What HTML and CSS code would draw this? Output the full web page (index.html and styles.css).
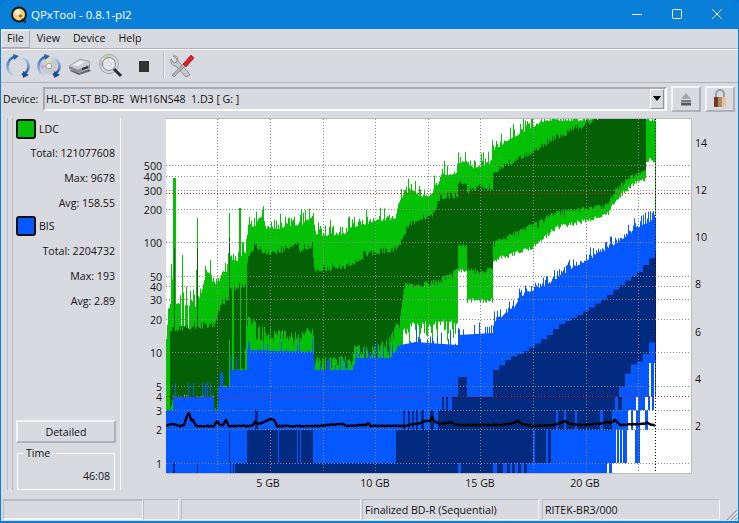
FILE: index.html
```html
<!DOCTYPE html>
<html lang="en">
<head>
    <meta charset="UTF-8">
    <title>QPxTool - 0.8.1-pl2</title>
    <link rel="stylesheet" href="styles.css">
</head>
<body>

<div class="window">
    <div class="titlebar">
        <svg class="app-icon" width="18" height="18" viewBox="0 0 18 18">
            <circle cx="9" cy="8.5" r="7" fill="#f4d27a" stroke="#1b1b1b" stroke-width="2"/>
            <circle cx="7.5" cy="6.5" r="2.6" fill="#fff6dc"/>
            <circle cx="10.5" cy="10" r="1.4" fill="#8a5a20"/>
            <path d="M12 13l3.5 3.5" stroke="#1b1b1b" stroke-width="2.4"/>
        </svg>
        <span class="title">QPxTool - 0.8.1-pl2</span>
        <div class="win-buttons">
            <svg width="12" height="12" viewBox="0 0 12 12"><path d="M1 6.5h10" stroke="#fff"/></svg>
            <svg width="12" height="12" viewBox="0 0 12 12"><rect x="1.5" y="1.5" width="9" height="9" rx="1" fill="none" stroke="#fff"/></svg>
            <svg width="12" height="12" viewBox="0 0 12 12"><path d="M1 1l10 10M11 1L1 11" stroke="#fff"/></svg>
        </div>
    </div>

    <div class="menubar">
        <span class="menu-item active">File</span>
        <span class="menu-item">View</span>
        <span class="menu-item">Device</span>
        <span class="menu-item">Help</span>
    </div>

    <div class="toolbar">
        <svg class="tool" width="26" height="26" viewBox="0 0 26 26">
            <defs>
                <linearGradient id="arcL" x1="0" y1="0" x2="0" y2="1"><stop offset="0" stop-color="#2a63ad"/><stop offset="1" stop-color="#c3dcf3"/></linearGradient>
                <linearGradient id="arcR" x1="0" y1="0" x2="0" y2="1"><stop offset="0" stop-color="#c3dcf3"/><stop offset="1" stop-color="#1c4b97"/></linearGradient>
            </defs>
            <path d="M11 3C5 5 2.500 9 2.500 13.500S5 21 9 23" fill="none" stroke="url(#arcL)" stroke-width="2.600"/>
            <path d="M8 1l6 2-5 4z" fill="#2a63ad"/>
            <path d="M17 4c4 2 6.500 5 6.500 9.500S21 20 17 22" fill="none" stroke="url(#arcR)" stroke-width="2.600"/>
            <path d="M18 18v7l6-3z" fill="#1c4b97"/>
        </svg>
        <svg class="tool" width="26" height="26" viewBox="0 0 26 26">
            <circle cx="13" cy="13" r="8.500" fill="#c8cbd0"/>
            <path d="M13 13L8 6a8.500 8.500 0 0 1 8-1z" fill="#d8e4a8"/>
            <path d="M13 13l-8 3a8.500 8.500 0 0 1-.5-4z" fill="#c9a6d8"/>
            <circle cx="13" cy="13" r="2.800" fill="#eef0f2" stroke="#8d9096" stroke-width=".8"/>
            <path d="M11 3C5 5 2.500 9 2.500 13.500S5 21 9 23" fill="none" stroke="url(#arcL)" stroke-width="2.600"/>
            <path d="M8 1l6 2-5 4z" fill="#2a63ad"/>
            <path d="M17 4c4 2 6.500 5 6.500 9.500S21 20 17 22" fill="none" stroke="url(#arcR)" stroke-width="2.600"/>
            <path d="M18 18v7l6-3z" fill="#1c4b97"/>
        </svg>
        <svg class="tool" width="26" height="26" viewBox="0 0 26 26">
            <path d="M2 13L13 6l9 2 1 4-12 5z" fill="#c9ccd1" stroke="#8b8e93" stroke-width=".6"/>
            <path d="M2 13l9 4 12-5v3l-12 5-9-4z" fill="#8b8d92"/>
            <path d="M3 18l9 4 12-4-2-2-10 4-8-3z" fill="#66686c"/>
            <path d="M6 12l7-4 5 1-7 4z" fill="#eceef0"/>
            <path d="M15 15l6-2v2l-6 2z" fill="#2b2c2e"/>
        </svg>
        <svg class="tool" width="26" height="26" viewBox="0 0 26 26">
            <circle cx="11" cy="11" r="9.500" fill="#d4d6da" stroke="#a5a8ad"/>
            <path d="M11 11L5 4a9.500 9.500 0 0 1 6-2z" fill="#bcd6a0"/>
            <path d="M11 11L2 13a9.500 9.500 0 0 1 .5-5z" fill="#d3b3dc"/>
            <circle cx="11" cy="11" r="6.500" fill="#eef0f3" fill-opacity=".65" stroke="#85888d"/>
            <circle cx="11" cy="11" r="2" fill="#f7f8f9" stroke="#a5a8ad" stroke-width=".6"/>
            <path d="M16 16l7 7" stroke="#2d2e30" stroke-width="3"/>
        </svg>
        <span class="stop"></span>
        <span class="tool-sep"></span>
        <svg class="tool" width="26" height="26" viewBox="0 0 26 26">
            <path d="M4 3l4 3 0 3-3 1-3-4C1 10 3 13 7 13l10 11 4-2-2-3L9 8C9 4 7 2 4 3z" fill="#c6c9ce" stroke="#7b7e83" stroke-width=".8"/>
            <path d="M3 22L14 11l2 2L5 24z" fill="#aeb1b6" stroke="#6f7277" stroke-width=".6"/>
            <path d="M14 11L22 2l3 3-8 9z" fill="#d8202a" stroke="#8e1118" stroke-width=".6"/>
        </svg>
    </div>

    <div class="devicebar">
        <label class="device-label">Device:</label>
        <div class="combo">
            <span class="combo-text">HL-DT-ST BD-RE&nbsp; WH16NS48&nbsp; 1.D3 [ G: ]</span>
            <span class="combo-drop"><i class="drop-arrow"></i></span>
        </div>
        <button class="square-btn">
            <svg width="14" height="14" viewBox="0 0 14 14">
                <path d="M7 1l5 6H2z" fill="#a5a7ab"/>
                <rect x="2" y="8" width="10" height="2.500" fill="#77797d"/>
                <rect x="2" y="11" width="10" height="2.500" fill="#55575a"/>
            </svg>
        </button>
        <button class="square-btn">
            <svg width="16" height="19" viewBox="0 0 16 19">
                <path d="M4 9V5a4 4 0 0 1 8 0v4" fill="none" stroke="#9b9da1" stroke-width="2"/>
                <rect x="2" y="8" width="12" height="10" fill="#b48a63"/>
                <rect x="2" y="8" width="4" height="10" fill="#6f3a22"/>
                <rect x="10" y="8" width="4" height="10" fill="#e0c4a0"/>
            </svg>
        </button>
    </div>

    <div class="main">
        <div class="sidebar">
            <div class="legend-row">
                <span class="swatch swatch-ldc"></span><span>LDC</span>
            </div>
            <div class="stat">Total: 121077608</div>
            <div class="stat">Max: 9678</div>
            <div class="stat">Avg: 158.55</div>
            <div class="legend-row legend-bis">
                <span class="swatch swatch-bis"></span><span>BIS</span>
            </div>
            <div class="stat">Total: 2204732</div>
            <div class="stat">Max: 193</div>
            <div class="stat">Avg: 2.89</div>
            <button class="detail-btn">Detailed</button>
            <fieldset class="time-box">
                <legend>Time</legend>
                <div class="time-value">46:08</div>
            </fieldset>
        </div>
        <div class="chart" id="chart">
            <canvas id="plot" width="525" height="354"></canvas>
        </div>
    </div>

    <div class="statusbar">
        <span class="cell cell-a"></span>
        <span class="cell cell-b"></span>
        <span class="cell cell-c"></span>
        <span class="cell cell-d">Finalized BD-R (Sequential)</span>
        <span class="cell cell-e">RITEK-BR3/000</span>
        <svg class="grip" width="12" height="12" viewBox="0 0 12 12">
            <path d="M11 1L1 11M11 5l-6 6M11 9l-2 2" stroke="#9c9ea8" stroke-width="1.200"/>
            <path d="M12 2L2 12M12 6l-6 6M12 10l-2 2" stroke="#f4f4f7"/>
        </svg>
    </div>
</div>

<script src="chart.js"></script>
</body>
</html>
```

FILE: styles.css
```css
html, body {
    margin: 0;
    padding: 0;
    background: #0078d4;
}

body {
    font-family: "Open Sans", "Noto Sans", sans-serif;
    font-size: 10.6px;
    color: #111;
    width: 739px;
    height: 523px;
    overflow: hidden;
}

.window {
    width: 739px;
    height: 523px;
    box-sizing: border-box;
    padding: 0 1px 2px 1px;
    background: #0a7fd8;
    display: flex;
    flex-direction: column;
    border-radius: 7px 7px 0 0;
}

.titlebar {
    height: 29px;
    flex: none;
    display: flex;
    align-items: center;
    padding-left: 9px;
    color: #fff;
    font-size: 11.500px;
}

.app-icon {
    margin-right: 3px;
}

.win-buttons {
    margin-left: auto;
    display: flex;
    gap: 28px;
    padding: 0 15px 2px 0;
}

.menubar {
    height: 19px;
    flex: none;
    display: flex;
    align-items: center;
    background: #d9dae0;
    border-bottom: 1px solid #b0b2bd;
    box-shadow: 0 1px 0 #fff;
}

.menu-item {
    padding: 0 6px;
    height: 17px;
    line-height: 17px;
    margin-right: 1px;
}

.menu-item.active {
    border: 1px solid;
    border-color: #f5f5f8 #a8aab5 #a8aab5 #f5f5f8;
    height: 16px;
    line-height: 15px;
    padding: 0 5px;
}

.toolbar {
    height: 33px;
    flex: none;
    margin-top: 1px;
    display: flex;
    align-items: center;
    background: #d9dae0;
    border-bottom: 1px solid #b0b2bd;
    padding-left: 4px;
    box-sizing: border-box;
}

.tool {
    margin-right: 5px;
}

.stop {
    width: 10px;
    height: 11px;
    background: #333;
    margin: 0 14px 0 10px;
}

.tool-sep {
    width: 1px;
    height: 26px;
    background: #f4f4f7;
    border-left: 1px solid #b8bac4;
    margin-right: 4px;
}

.devicebar {
    height: 29px;
    flex: none;
    box-sizing: border-box;
    padding-top: 2px;
    display: flex;
    align-items: center;
    background: #d9dae0;
}

.device-label {
    width: 42px;
    padding-left: 2px;
    box-sizing: border-box;
    flex: none;
}

.combo {
    width: 624px;
    height: 24px;
    box-sizing: border-box;
    flex: none;
    display: flex;
    align-items: center;
    justify-content: space-between;
    border: 2px solid;
    border-color: #a8aab5 #fff #fff #a8aab5;
    padding-left: 1px;
}

.combo-drop {
    width: 14px;
    height: 20px;
    box-sizing: border-box;
    margin-right: 1px;
    border: 1px solid;
    border-color: #fff #8d8f9a #8d8f9a #fff;
    display: flex;
    align-items: center;
    justify-content: center;
}

.drop-arrow {
    width: 0;
    height: 0;
    border: 4px solid transparent;
    border-top: 5px solid #000;
    border-bottom: 0;
}

.square-btn {
    width: 30px;
    height: 26px;
    padding: 0;
    margin-left: 4px;
    flex: none;
    background: #d9dae0;
    border: 2px solid;
    border-color: #f4f4f7 #aeb0bb #aeb0bb #f4f4f7;
    display: flex;
    align-items: center;
    justify-content: center;
}

.main {
    height: 387px;
    flex: none;
    display: flex;
    background: #d9dae0;
}

.sidebar {
    width: 114px;
    height: 372px;
    margin: 6px 0 0 6px;
    box-sizing: border-box;
    flex: none;
    padding: 0 5px 0 8px;
    display: flex;
    flex-direction: column;
    border-left: 1px solid #b8bac4;
    border-right: 1px solid #f4f4f7;
    background: linear-gradient(#b8bac4, #b8bac4) 4px 0 / 1px 100% no-repeat;
}

.legend-row {
    display: flex;
    align-items: center;
    gap: 3px;
    height: 21px;
}

.swatch {
    width: 20px;
    height: 20px;
    box-sizing: border-box;
    border: 2px solid #111;
    border-radius: 3px;
}

.swatch-ldc {
    background: #05c005;
}

.swatch-bis {
    background: #0557ff;
}

.stat {
    text-align: right;
    height: 25px;
    line-height: 27px;
}

.legend-row + .stat {
    margin-top: 1px;
}

.legend-bis + .stat {
    margin-top: 2px;
}

.detail-btn {
    margin-top: auto;
    width: 100px;
    height: 23px;
    padding: 0;
    font: inherit;
    color: inherit;
    background: #d9dae0;
    border: 2px solid;
    border-color: #f4f4f7 #aeb0bb #aeb0bb #f4f4f7;
}

.time-box {
    margin: 3px 0 0 1px;
    padding: 0 4px 3px;
    width: 98px;
    height: 44px;
    box-sizing: border-box;
    border: 1px solid #fff;
}

.time-box legend {
    padding: 0 2px;
    margin-left: 2px;
}

.time-value {
    text-align: right;
    margin-top: 9px;
}

.chart {
    position: relative;
    flex: 1;
    padding: 7px 0 0 45px;
}

.chart canvas {
    display: block;
    border: 1px solid #b8bac4;
    border-left: 0;
    margin-top: -1px;
}

.axis-label {
    position: absolute;
    line-height: 13px;
    white-space: nowrap;
}

.axis-left {
    right: 576px;
}

.axis-right {
    left: 574px;
}

.axis-bottom {
    transform: translateX(-50%);
}

.statusbar {
    flex: 1;
    display: flex;
    background: #d9dae0;
    padding: 0 0 1px 2px;
    position: relative;
}

.cell {
    box-sizing: border-box;
    height: 21px;
    line-height: 20px;
    padding-left: 2px;
    border: 1px solid;
    border-color: #b8bac4 #f4f4f7 #f4f4f7 #b8bac4;
    white-space: nowrap;
}

.cell-a { width: 140px; border-top-width: 2px; border-bottom-width: 2px; }
.cell-b { width: 36px; margin-right: 2px; }
.cell-c { width: 180px; margin-right: 1px; }
.cell-d { width: 177px; margin-right: 3px; }
.cell-e { width: 178px; }

.grip {
    position: absolute;
    right: 0;
    bottom: 0;
}
```

FILE: chart.js
```js
// LDC / BIS graph, drawn column by column
const canvas = document.getElementById('plot');
const ctx = canvas.getContext('2d');
const chart = document.getElementById('chart');

const LEFT = 166, TOP = 119, RIGHT = 691, BOTTOM = 473, END = 656;
const LIGHT_GREEN = '#05c105', DARK_GREEN = '#046004';
const LIGHT_BLUE = '#0557ff', DARK_BLUE = '#022b80';

let seed = 4711;
function rnd() {
    seed = (seed * 16807) % 2147483647;
    return seed / 2147483647;
}

function lerp(points, x) {
    for (let i = 1; i < points.length; i++) {
        if (x <= points[i][0]) {
            const a = points[i - 1], b = points[i];
            if (b[0] === a[0]) return b[1];
            return a[1] + (b[1] - a[1]) * (x - a[0]) / (b[0] - a[0]);
        }
    }
    return points[points.length - 1][1];
}

const lgTop = [[166,335],[170,300],[172,288],[176,300],[195,303],[200,293],[205,272],[215,280],[219,277],[222,268],[228,268],[230,255],[240,258],[245,250],[246,235],[250,225],[255,222],[258,215],[262,212],[266,225],[280,225],[290,222],[300,222],[310,215],[313,212],[314,232],[330,232],[345,230],[350,224],[375,218],[395,215],[398,200],[404,190],[412,187],[420,193],[430,192],[438,180],[441,172],[456,170],[457,160],[466,157],[470,165],[490,160],[493,147],[510,135],[530,125],[545,117],[656,117]];
const lgBot = [[166,415],[402,415],[403,322],[457,320],[458,268],[466,268],[467,298],[492,298],[493,258],[533,245],[556,225],[587,218],[607,212],[615,198],[630,184],[645,176],[646,158],[656,158]];
const dgTop = [[170,330],[215,325],[220,305],[228,300],[230,290],[245,285],[247,262],[249,255],[255,245],[260,250],[270,255],[285,250],[295,243],[300,250],[312,246],[314,270],[340,268],[350,265],[365,255],[380,252],[395,250],[400,243],[405,232],[410,226],[420,218],[430,220],[440,197],[457,197],[458,182],[466,182],[467,192],[480,188],[492,188],[493,172],[510,163],[530,153],[555,138],[575,130],[590,122],[600,117],[646,117]];
const dgBot = [[170,410],[173,397],[213,397],[214,410],[218,410],[219,387],[229,387],[230,372],[244,370],[245,345],[247,315],[260,328],[300,332],[313,328],[314,358],[345,358],[352,362],[354,347],[375,347],[390,338],[400,315],[403,295],[405,285],[420,285],[440,280],[457,270],[458,245],[466,245],[467,270],[492,270],[493,243],[533,225],[556,212],[587,208],[607,205],[615,190],[630,177],[645,172],[646,172]];
const blTop = [[166,410],[172,410],[173,397],[213,397],[214,410],[217,410],[218,387],[229,387],[230,370],[246,370],[247,350],[313,352],[315,370],[353,370],[355,358],[390,358],[400,345],[415,342],[457,345],[458,335],[492,333],[494,318],[513,305],[520,293],[553,278],[577,262],[590,255],[613,242],[640,222],[656,215]];
const dbTop = [[493,370],[502,363],[507,358],[520,353],[533,345],[547,335],[557,325],[577,315],[593,305],[607,295],[615,288],[637,272],[650,257],[656,252]];
const dbBot = [[493,397],[615,397],[623,377],[630,365],[640,360],[645,350],[648,340],[652,350],[656,362]];

const spikes = [[171,264,1],[173,178,3],[182,255,1],[196,270,1],[197,218,1],[229,213,1],[239,208,2]];
const darkSpikes = [[174,248,1],[197,248,1],[229,238,1]];

// dark blue stretches of the lower BIS bands: y from, y to, [x from, x to]...
const bands = [
    [397, 410, [[442,444],[446,448],[452,615],[618,622]]],
    [410, 430, [[255,258],[403,405],[408,410],[412,414],[416,418],[421,424],[430,434],[438,556],[558,564],[566,575],[577,600],[603,612]]],
    [430, 463, [[229,230],[247,278],[279,297],[298,300],[301,313],[396,533],[535,546],[548,551]]],
    [463, 473, [[173,175],[197,198],[230,231],[233,234],[235,458],[461,493],[497,503],[507,510],[512,515],[518,521],[524,527]]]
];
const holes = [
    [463, 473, [[607,609],[612,656]]],
    [430, 463, [[616,617],[619,620],[622,623],[627,635],[640,656]]],
    [410, 430, [[628,631],[633,636],[640,645],[648,656]]],
    [397, 410, [[636,638],[645,648],[650,652],[654,656]]],
    [363, 397, [[649,651],[654,655]]]
];

function col(x, y1, y2, color, w) {
    ctx.fillStyle = color;
    ctx.fillRect(x, y1, w || 1, y2 - y1);
}

ctx.translate(-LEFT, -TOP);
ctx.fillStyle = '#fff';
ctx.fillRect(LEFT, TOP, RIGHT - LEFT, BOTTOM - TOP);

// LDC
for (let x = LEFT; x < END; x++) {
    const left = x < 250;
    const r = rnd();
    const up = r * r * r * (left ? 20 : 16);
    const down = x > 402 && x < 458 ? rnd() * rnd() * 24 : rnd() * 5;
    const y1 = lerp(lgTop, x) - up + 4;
    if (x >= 170 && x < 200 && rnd() < 0.25) continue;
    col(x, y1, lerp(lgBot, x) + down, LIGHT_GREEN);
}
spikes.forEach(s => col(s[0], s[1], 340, LIGHT_GREEN, s[2]));
col(655, 150, 215, LIGHT_GREEN);

for (let x = 170; x < 646; x++) {
    const r = rnd();
    const y1 = lerp(dgTop, x) - r * r * 7 + 2;
    const hang = x >= 247 && x < 400 ? 22 : 8;
    const y2 = lerp(dgBot, x) + rnd() * rnd() * hang - 2;
    if (x > 225 && x < 247 && rnd() < 0.3) continue;
    col(x, y1, y2, DARK_GREEN);
}
darkSpikes.forEach(s => col(s[0], s[1], 340, DARK_GREEN, s[2]));

// BIS
for (let x = LEFT; x < END; x++) {
    const r = rnd();
    let up = 0;
    if (x >= 494) up = r * r * 12;
    else if (x >= 245 && r > 0.7) up = (r - 0.7) * 50;
    else if (x >= 173 && r > 0.9) up = 14;
    col(x, lerp(blTop, x) - up + (x >= 494 ? 4 : 0), BOTTOM, LIGHT_BLUE);
}
col(458, 377, 397, DARK_BLUE, 9);
for (let x = 493; x < END; x += 6) {
    const y1 = lerp(dbTop, x);
    const y2 = lerp(dbBot, x);
    col(x, y1, y2, DARK_BLUE, Math.min(6, END - x));
}
bands.forEach(b => b[2].forEach(r => col(r[0], b[0], b[1], DARK_BLUE, r[1] - r[0])));
holes.forEach(b => b[2].forEach(r => col(r[0], b[0], b[1], '#fff', r[1] - r[0])));

// grid
function dotsH(y, color) {
    ctx.fillStyle = color;
    for (let x = LEFT; x < RIGHT; x += 3) ctx.fillRect(x, y, 1, 1);
}
function dotsV(x, color) {
    ctx.fillStyle = color;
    for (let y = TOP; y < BOTTOM; y += 3) ctx.fillRect(x, y, 1, 1);
}
const leftAxis = [[500,165],[400,176],[300,190],[200,209],[100,242],[50,276],[40,286],[30,299],[20,319],[10,352],[5,386],[4,396],[3,410],[2,429],[1,463]];
leftAxis.forEach(a => {
    if (a[0] !== 4) dotsH(a[1], '#8a8a84');
});
dotsH(193, '#ee1111');
dotsH(396, '#ee1111');
for (let k = 1; k <= 9; k++) dotsV(Math.round(164.7 + 52.6 * k), '#8a8a84');
dotsV(END - 1, '#000');

// black error line
const jitterLine = [[166,426],[172,424],[180,426],[184,425],[187,416],[189,413],[191,420],[193,420],[196,426],[214,426],[217,421],[220,425],[223,425],[226,420],[229,426],[252,426],[255,422],[258,424],[262,423],[266,421],[270,419],[274,420],[277,426],[320,426],[326,425],[343,424],[346,426],[366,425],[368,423],[371,426],[396,426],[404,426],[420,423],[425,421],[430,421],[432,417],[434,421],[440,424],[450,422],[456,425],[470,425],[500,425],[510,424],[518,421],[522,424],[533,426],[555,425],[565,421],[570,424],[580,425],[600,424],[606,422],[611,423],[615,420],[620,425],[640,424],[647,423],[656,426]];
ctx.strokeStyle = '#000';
ctx.lineWidth = 2.4;
ctx.lineJoin = 'round';
ctx.beginPath();
for (let x = LEFT; x < END; x++) {
    const y = lerp(jitterLine, x) + (rnd() - 0.5) * 0.8;
    if (x === LEFT) ctx.moveTo(x, y); else ctx.lineTo(x, y);
}
ctx.stroke();

const CHART_X = 121, CHART_Y = 112;
function addLabel(text, cls, x, y) {
    const el = document.createElement('span');
    el.className = 'axis-label ' + cls;
    el.textContent = text;
    if (x !== null) el.style.left = (x - CHART_X) + 'px';
    el.style.top = (y - CHART_Y - 6) + 'px';
    chart.appendChild(el);
}
leftAxis.forEach(a => addLabel(a[0], 'axis-left', null, a[1] + 1));
[[14,143],[12,190],[10,237],[8,284],[6,332],[4,379],[2,426]].forEach(a => addLabel(a[0], 'axis-right', null, a[1]));
[['5 GB',268],['10 GB',375],['15 GB',480],['20 GB',585]].forEach(a => addLabel(a[0], 'axis-bottom', a[1], 483));
```
